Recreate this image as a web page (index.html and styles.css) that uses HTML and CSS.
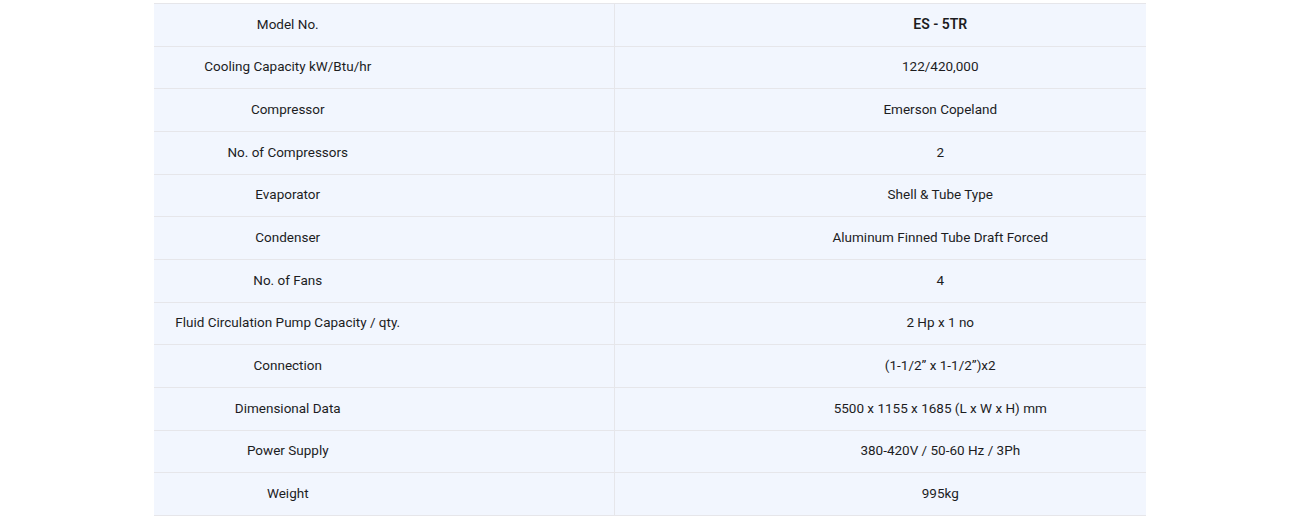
FILE: index.html
```html
<!DOCTYPE html>
<html>
<head>
<meta charset="utf-8">
<link rel="stylesheet" href="styles.css">
</head>
<body>
<table class="spec">
<tbody>
<tr><td class="k">Model No.</td><td class="v b">ES - 5TR</td></tr>
<tr><td class="k">Cooling Capacity kW/Btu/hr</td><td class="v">122/420,000</td></tr>
<tr><td class="k">Compressor</td><td class="v">Emerson Copeland</td></tr>
<tr><td class="k">No. of Compressors</td><td class="v">2</td></tr>
<tr><td class="k">Evaporator</td><td class="v">Shell &amp; Tube Type</td></tr>
<tr><td class="k">Condenser</td><td class="v">Aluminum Finned Tube Draft Forced</td></tr>
<tr><td class="k">No. of Fans</td><td class="v">4</td></tr>
<tr><td class="k">Fluid Circulation Pump Capacity / qty.</td><td class="v">2 Hp x 1 no</td></tr>
<tr><td class="k">Connection</td><td class="v">(1-1/2” x 1-1/2”)x2</td></tr>
<tr><td class="k">Dimensional Data</td><td class="v">5500 x 1155 x 1685 (L x W x H) mm</td></tr>
<tr><td class="k">Power Supply</td><td class="v">380-420V / 50-60 Hz / 3Ph</td></tr>
<tr><td class="k">Weight</td><td class="v">995kg</td></tr>
</tbody>
</table>
</body>
</html>
```
FILE: styles.css
```css
html, body {
  margin: 0;
  padding: 0;
  background: #ffffff;
}
.spec {
  margin: 3px 0 0 154px;
  width: 992px;
  border-collapse: collapse;
  table-layout: fixed;
  background: #f2f6fe;
  font-family: Roboto, "Liberation Sans", sans-serif;
  font-size: 13.5px;
  color: #1d1d1f;
  border-top: 1px solid #e6e6ea;
}
.spec td {
  height: 42.67px;
  padding: 0 0 2px 0;
  box-sizing: border-box;
  border-bottom: 1px solid #e6e6ea;
  text-align: center;
  vertical-align: middle;
  line-height: 20px;
}
.spec td.k {
  width: 460px;
  padding-right: 192px;
  border-right: 1px solid #e6e6ea;
}
.spec td.v {
  padding-left: 120px;
}
.spec td.b {
  font-size: 14px;
  font-weight: 600;
}
```
